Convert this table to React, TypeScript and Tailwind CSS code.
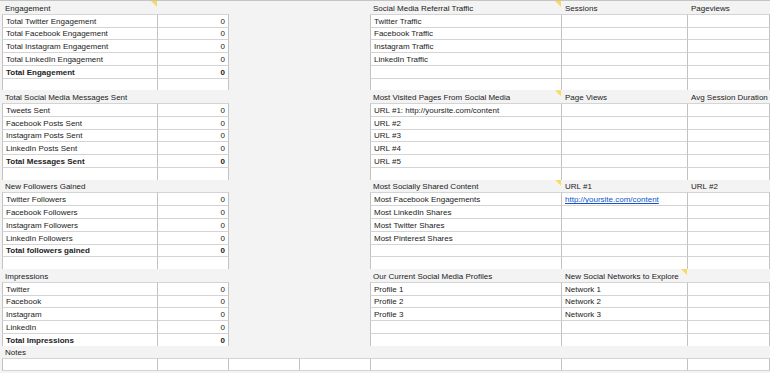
import React from 'react';

type LeftCell =
  | { kind: 'head'; text: string; tri?: boolean }
  | { kind: 'data'; label?: string; value?: string; bold?: boolean };

type RightCell =
  | { kind: 'head'; cells: [string, string, string]; tri?: number }
  | { kind: 'data'; cells: [string, string, string]; link?: boolean }
  | { kind: 'gray' };

interface Row {
  left: LeftCell;
  right: RightCell;
  notesLine?: boolean;
}

const blankL: LeftCell = { kind: 'data' };
const blankR: RightCell = { kind: 'data', cells: ['', '', ''] };

const rows: Row[] = [
  { left: { kind: 'head', text: 'Engagement', tri: true }, right: { kind: 'head', cells: ['Social Media Referral Traffic', 'Sessions', 'Pageviews'], tri: 0 } },
  { left: { kind: 'data', label: 'Total Twitter Engagement', value: '0' }, right: { kind: 'data', cells: ['Twitter Traffic', '', ''] } },
  { left: { kind: 'data', label: 'Total Facebook Engagement', value: '0' }, right: { kind: 'data', cells: ['Facebook Traffic', '', ''] } },
  { left: { kind: 'data', label: 'Total Instagram Engagement', value: '0' }, right: { kind: 'data', cells: ['Instagram Traffic', '', ''] } },
  { left: { kind: 'data', label: 'Total LinkedIn Engagement', value: '0' }, right: { kind: 'data', cells: ['LinkedIn Traffic', '', ''] } },
  { left: { kind: 'data', label: 'Total Engagement', value: '0', bold: true }, right: blankR },
  { left: blankL, right: blankR },

  { left: { kind: 'head', text: 'Total Social Media Messages Sent' }, right: { kind: 'head', cells: ['Most Visited Pages From Social Media', 'Page Views', 'Avg Session Duration'], tri: 0 } },
  { left: { kind: 'data', label: 'Tweets Sent', value: '0' }, right: { kind: 'data', cells: ['URL #1: http://yoursite.com/content', '', ''] } },
  { left: { kind: 'data', label: 'Facebook Posts Sent', value: '0' }, right: { kind: 'data', cells: ['URL #2', '', ''] } },
  { left: { kind: 'data', label: 'Instagram Posts Sent', value: '0' }, right: { kind: 'data', cells: ['URL #3', '', ''] } },
  { left: { kind: 'data', label: 'LinkedIn Posts Sent', value: '0' }, right: { kind: 'data', cells: ['URL #4', '', ''] } },
  { left: { kind: 'data', label: 'Total Messages Sent', value: '0', bold: true }, right: { kind: 'data', cells: ['URL #5', '', ''] } },
  { left: blankL, right: blankR },

  { left: { kind: 'head', text: 'New Followers Gained' }, right: { kind: 'head', cells: ['Most Socially Shared Content', 'URL #1', 'URL #2'], tri: 0 } },
  { left: { kind: 'data', label: 'Twitter Followers', value: '0' }, right: { kind: 'data', cells: ['Most Facebook Engagements', 'http://yoursite.com/content', ''], link: true } },
  { left: { kind: 'data', label: 'Facebook Followers', value: '0' }, right: { kind: 'data', cells: ['Most LinkedIn Shares', '', ''] } },
  { left: { kind: 'data', label: 'Instagram Followers', value: '0' }, right: { kind: 'data', cells: ['Most Twitter Shares', '', ''] } },
  { left: { kind: 'data', label: 'LinkedIn Followers', value: '0' }, right: { kind: 'data', cells: ['Most Pinterest Shares', '', ''] } },
  { left: { kind: 'data', label: 'Total followers gained', value: '0', bold: true }, right: blankR },
  { left: blankL, right: blankR },

  { left: { kind: 'head', text: 'Impressions' }, right: { kind: 'head', cells: ['Our Current Social Media Profiles', 'New Social Networks to Explore', ''], tri: 1 } },
  { left: { kind: 'data', label: 'Twitter', value: '0' }, right: { kind: 'data', cells: ['Profile 1', 'Network 1', ''] } },
  { left: { kind: 'data', label: 'Facebook', value: '0' }, right: { kind: 'data', cells: ['Profile 2', 'Network 2', ''] } },
  { left: { kind: 'data', label: 'Instagram', value: '0' }, right: { kind: 'data', cells: ['Profile 3', 'Network 3', ''] } },
  { left: { kind: 'data', label: 'LinkedIn', value: '0' }, right: blankR },
  { left: { kind: 'data', label: 'Total Impressions', value: '0', bold: true }, right: blankR },

  { left: { kind: 'head', text: 'Notes' }, right: { kind: 'gray' } },
  { left: blankL, right: blankR, notesLine: true },
];

function Tri() {
  return (
    <span className="absolute top-0 right-[1px] w-[6px] h-[6px] bg-[#f6dc5c] [clip-path:polygon(0_0,100%_0,100%_100%)]" />
  );
}

function Sheet() {
  return (
    <div className="flex flex-col">
      {rows.map((row, i) => {
        const last = row.notesLine;
        const white = 'bg-white border-t border-t-[#d4d4d4] border-r border-r-[#c3c3c3]';
        const bottom = last ? 'border-b border-b-[#d4d4d4]' : '';
        return (
          <div key={i} className="flex h-[12.77px]">
            {row.left.kind === 'head' ? (
              <div className="relative w-[368px] shrink-0 flex items-end px-[3px] whitespace-nowrap">
                {row.left.text}
                {row.left.tri && <span className="absolute top-0 left-[149px] w-[6px] h-[6px] bg-[#f6dc5c] [clip-path:polygon(0_0,100%_0,100%_100%)]" />}
              </div>
            ) : (
              <>
                <div className={`w-[156px] shrink-0 flex items-end px-[3px] whitespace-nowrap overflow-hidden border-l border-l-[#c3c3c3] ${white} ${bottom} ${row.left.bold ? 'font-bold' : ''}`}>
                  {row.left.label}
                </div>
                <div className={`w-[71px] shrink-0 flex items-end justify-end px-[3px] whitespace-nowrap ${white} ${bottom} ${row.left.bold ? 'font-bold' : ''}`}>
                  {row.left.value}
                </div>
                {last ? (
                  <>
                    <div className={`w-[71px] shrink-0 ${white} ${bottom}`} />
                    <div className="w-[70px] shrink-0 bg-white border-t border-t-[#d4d4d4] border-b border-b-[#d4d4d4]" />
                  </>
                ) : (
                  <div className="w-[141px] shrink-0" />
                )}
              </>
            )}

            {row.right.kind === 'head' && (
              <>
                <div className="relative w-[192px] shrink-0 flex items-end px-[3px] whitespace-nowrap">
                  {row.right.cells[0]}
                  {row.right.tri === 0 && <Tri />}
                </div>
                <div className="relative w-[126px] shrink-0 flex items-end px-[3px] whitespace-nowrap">
                  {row.right.cells[1]}
                  {row.right.tri === 1 && <Tri />}
                </div>
                <div className="flex-1 flex items-end px-[3px] whitespace-nowrap">{row.right.cells[2]}</div>
              </>
            )}
            {row.right.kind === 'data' && (
              <>
                <div className={`w-[192px] shrink-0 flex items-end px-[3px] whitespace-nowrap overflow-hidden border-l border-l-[#c3c3c3] ${white} ${bottom}`}>
                  {row.right.cells[0]}
                </div>
                <div className={`w-[126px] shrink-0 flex items-end px-[3px] whitespace-nowrap overflow-hidden ${white} ${bottom}`}>
                  {row.right.link ? (
                    <a href="#" className="text-[#1155cc] underline">{row.right.cells[1]}</a>
                  ) : (
                    row.right.cells[1]
                  )}
                </div>
                <div className={`flex-1 flex items-end px-[3px] whitespace-nowrap ${white} ${bottom}`}>{row.right.cells[2]}</div>
              </>
            )}
            {row.right.kind === 'gray' && <div className="flex-1" />}
          </div>
        );
      })}
    </div>
  );
}

export default function App() {
  return (
    <div className="w-[770px] h-[373px] overflow-hidden bg-[#f3f3f3] border-t border-t-[#c4c4c4] pl-[2px] font-['Liberation_Sans',Arial,sans-serif] text-[8px] leading-[10px] text-[#222]">
      <Sheet />
    </div>
  );
}
